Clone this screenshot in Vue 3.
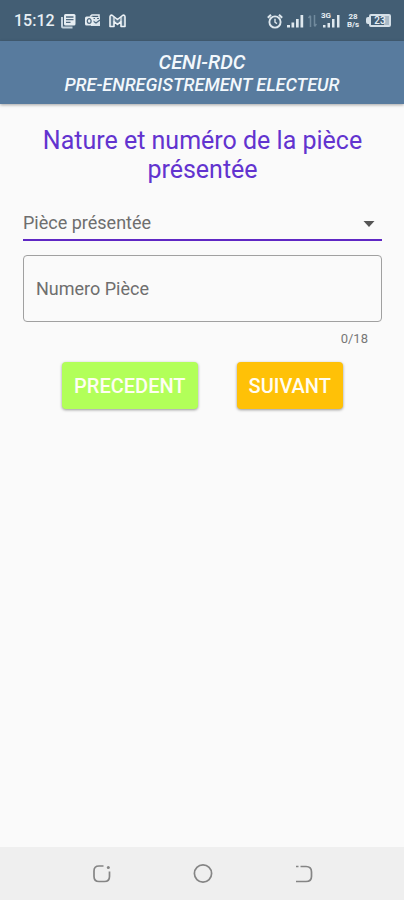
<script setup>
import { ref } from 'vue'

const maxLength = 18
const pieceType = ref('')
const pieceNumber = ref('')
const pieceTypes = ["Carte d'électeur", 'Passeport', 'Permis de conduire', "Carte d'élève"]
</script>

<template>
  <div class="screen">
    <div class="status">
      <div class="status-left">
        <span class="time">15:12</span>
        <div class="notices">
          <svg width="16" height="16" viewBox="0 0 16 16" aria-hidden="true">
            <path d="M2 4v9.500q0 1 1 1h9.500" fill="none" stroke="#c3d1dc" stroke-width="2" />
            <rect x="4" y="1" width="11.500" height="11.500" rx="1.500" fill="#e6edf2" />
            <path d="M6 4h7.500M6 6.700h7.500M6 9.400h4.500" stroke="#4f6a80" stroke-width="1.300" />
          </svg>
          <svg width="17" height="16" viewBox="0 0 17 16" aria-hidden="true">
            <path d="M6 3.500 8 2h7v5" fill="none" stroke="#e6edf2" stroke-width="1.500" />
            <path d="M7 4h9v9H7z" fill="#dbe4eb" />
            <path d="M9 5.500h2M13 5.500h2M9 8l3 2 4-3" stroke="#4f6a80" stroke-width="1.200" fill="none" />
            <rect x="1" y="3.500" width="8.500" height="9" rx="1.500" fill="#e6edf2" />
            <ellipse cx="5.200" cy="8" rx="1.900" ry="2.300" fill="none" stroke="#4f6a80" stroke-width="1.300" />
          </svg>
          <svg width="17" height="16" viewBox="0 0 17 16" aria-hidden="true">
            <path d="M1 13.500V4q0-2.600 2.500-1.500l5 4 5-4Q16 1.400 16 4v9.500h-4V8.500l-3.500 3-3.500-3v5z" fill="#5d788d" stroke="#edf2f6" stroke-width="1.600" stroke-linejoin="round" />
            <path d="M5 4v4.500M12 4v4.500" stroke="#edf2f6" stroke-width="1.200" />
          </svg>
        </div>
      </div>
      <div class="status-right">
        <svg width="16" height="16" viewBox="0 0 16 16" fill="none" stroke="#dfe8ee" aria-hidden="true">
          <circle cx="8" cy="9" r="5.600" stroke-width="1.900" />
          <path d="M.8 4.700 4 1.700M15.200 4.700 12 1.700" stroke-width="2" />
          <path d="M8 5.800V9.200l2 1.400" stroke-width="1.400" />
        </svg>
        <svg width="17" height="14" viewBox="0 0 17 14" fill="#dfe8ee" aria-hidden="true">
          <path d="M0 11h3v2.500H0zM4.500 8.500h2.700v5H4.500zM9 5h2.700v8.500H9zM13.500 1h2.700v12.500h-2.700z" />
        </svg>
        <svg width="9" height="14" viewBox="0 0 9 14" fill="none" stroke="#718a9d" stroke-width="1.500" aria-hidden="true">
          <path d="M2.500 13V2M.5 4l2-2.500M6.500 1v11M8.500 10l-2 2.500" />
        </svg>
        <div class="mobile">
          <span class="tiny">3G</span>
          <svg width="19" height="14" viewBox="0 0 19 14" fill="#dfe8ee" aria-hidden="true">
            <path d="M2 11h2.500v2.500H2zM6.500 9H9v4.500H6.500zM11 5h2.500v8.500H11zM16 1h2.500v12.500H16z" />
          </svg>
        </div>
        <div class="speed"><span>28</span><span>B/s</span></div>
        <div class="battery"><span>23</span></div>
      </div>
    </div>

    <header class="header">
      <h1>CENI-RDC</h1>
      <p>PRE-ENREGISTREMENT ELECTEUR</p>
    </header>

    <main class="content">
      <h2 class="title">Nature et numéro de la pièce présentée</h2>
      <div class="select-wrap">
        <select v-model="pieceType" class="select" aria-label="Pièce présentée">
          <option value="" disabled>Pièce présentée</option>
          <option v-for="t in pieceTypes" :key="t" :value="t">{{ t }}</option>
        </select>
        <svg class="caret" width="12" height="6" viewBox="0 0 12 6" aria-hidden="true">
          <path d="M0.500 0h11L6 6z" fill="#555" />
        </svg>
      </div>
      <input v-model="pieceNumber" class="field" type="text" :maxlength="maxLength" placeholder="Numero Pièce" aria-label="Numero Pièce" />
      <div class="counter">{{ pieceNumber.length }}/{{ maxLength }}</div>
      <div class="actions">
        <button type="button" class="btn prev">PRECEDENT</button>
        <button type="button" class="btn next">SUIVANT</button>
      </div>
    </main>

    <nav class="navbar">
      <button type="button" aria-label="Applications récentes">
        <svg width="20" height="20" viewBox="0 0 20 20" fill="none" stroke="#858585" stroke-width="1.700">
          <path d="M11.500 2H7Q2 2 2 7v5.500q0 5 5 5h5.500q5 0 5-5V7.500" />
          <circle cx="16.300" cy="3.500" r="1.500" fill="#858585" stroke="none" />
        </svg>
      </button>
      <button type="button" aria-label="Accueil">
        <svg width="20" height="20" viewBox="0 0 20 20" fill="none" stroke="#858585" stroke-width="1.700">
          <circle cx="10" cy="9.500" r="8.600" />
        </svg>
      </button>
      <button type="button" aria-label="Retour">
        <svg width="20" height="20" viewBox="0 0 20 20" fill="none" stroke="#858585" stroke-width="1.700">
          <path d="M2 2.500h2.500M6.500 2.500H12q5.500 0 5.500 5.500v4.500q0 5-5.500 5H2" />
        </svg>
      </button>
    </nav>
  </div>
</template>

<style>
body {
  background: #fafafa;
}
</style>

<style scoped>
.screen {
  display: flex;
  flex-direction: column;
  min-height: 100vh;
  background: #fafafa;
  font-family: Roboto, "Liberation Sans", sans-serif;
}
svg {
  display: block;
  flex: none;
}
.status {
  display: flex;
  justify-content: space-between;
  align-items: center;
  height: 41px;
  padding: 0 13px 0 14px;
  background: #435e74;
  color: #e8eff4;
}
.status-left {
  display: flex;
  align-items: center;
  gap: 5px;
}
.notices {
  display: flex;
  align-items: center;
  gap: 8px;
}
.time {
  font-size: 16px;
  line-height: 20px;
  font-weight: 500;
}
.status-right {
  display: flex;
  align-items: center;
  gap: 4px;
}
.mobile {
  position: relative;
}
.tiny {
  position: absolute;
  top: -2px;
  left: 0;
  font-size: 8px;
  line-height: 8px;
  font-weight: 700;
}
.speed {
  display: flex;
  flex-direction: column;
  align-items: center;
  width: 18px;
  font-size: 8px;
  line-height: 8px;
  font-weight: 700;
}
.battery {
  position: relative;
  display: flex;
  align-items: center;
  justify-content: center;
  width: 22px;
  height: 13px;
  box-sizing: border-box;
  margin-left: 3px;
  border: 2px solid #d5e0e8;
  border-radius: 2px;
  background: linear-gradient(90deg, #435e74 75%, #a9bac7 75%);
  font-size: 10px;
  line-height: 10px;
  font-weight: 500;
}
.battery::before {
  content: "";
  position: absolute;
  left: -5px;
  top: 1px;
  width: 3px;
  height: 7px;
  border-radius: 2px 0 0 2px;
  background: #d5e0e8;
}
.header {
  padding: 10px 0 9px;
  background: #587b9e;
  box-shadow: 0 1px 3px rgba(0, 0, 0, 0.35);
  color: #f3f8fc;
  text-align: center;
  font-style: italic;
}
.header h1 {
  margin: 0;
  font-size: 20px;
  line-height: 23px;
  font-weight: 500;
}
.header p {
  margin: 0;
  font-size: 18px;
  line-height: 21px;
  font-weight: 500;
}
.content {
  flex: 1;
  padding: 22px 22px 24px 23px;
}
.title {
  margin: 0 0 22px;
  color: #6233cf;
  font-size: 25px;
  line-height: 29px;
  font-weight: 400;
  text-align: center;
}
.select-wrap {
  position: relative;
}
.select {
  display: block;
  width: 100%;
  height: 35px;
  padding: 0;
  border: 0;
  border-bottom: 2px solid #5f27c4;
  border-radius: 0;
  background: transparent;
  color: #6e6e6e;
  appearance: none;
  font: inherit;
  font-size: 18px;
}
.caret {
  position: absolute;
  right: 7px;
  top: 15px;
  pointer-events: none;
}
.field {
  display: block;
  box-sizing: border-box;
  width: 100%;
  height: 67px;
  margin-top: 14px;
  padding: 0 12px;
  border: 1px solid #a0a0a0;
  border-radius: 4px;
  background: transparent;
  color: #333;
  font: inherit;
  font-size: 18px;
}
.field::placeholder {
  color: #6e6e6e;
  opacity: 1;
}
.counter {
  margin-top: 9px;
  padding-right: 14px;
  color: #777;
  font-size: 13px;
  line-height: 16px;
  text-align: right;
}
.actions {
  display: flex;
  justify-content: center;
  gap: 39px;
  margin-top: 15px;
}
.btn {
  height: 47px;
  padding: 0 12px;
  border: 0;
  border-radius: 4px;
  box-shadow: 0 1px 3px rgba(0, 0, 0, 0.4);
  color: #fffdf2;
  font: inherit;
  font-size: 20px;
  font-weight: 500;
}
.prev {
  background: #b2ff59;
}
.next {
  background: #ffc107;
}
.navbar {
  display: flex;
  justify-content: center;
  gap: 81px;
  height: 53px;
  padding-left: 2px;
  background: #efefef;
}
.navbar button {
  display: flex;
  align-items: center;
  justify-content: center;
  width: 20px;
  padding: 0;
  border: 0;
  background: transparent;
}
</style>
